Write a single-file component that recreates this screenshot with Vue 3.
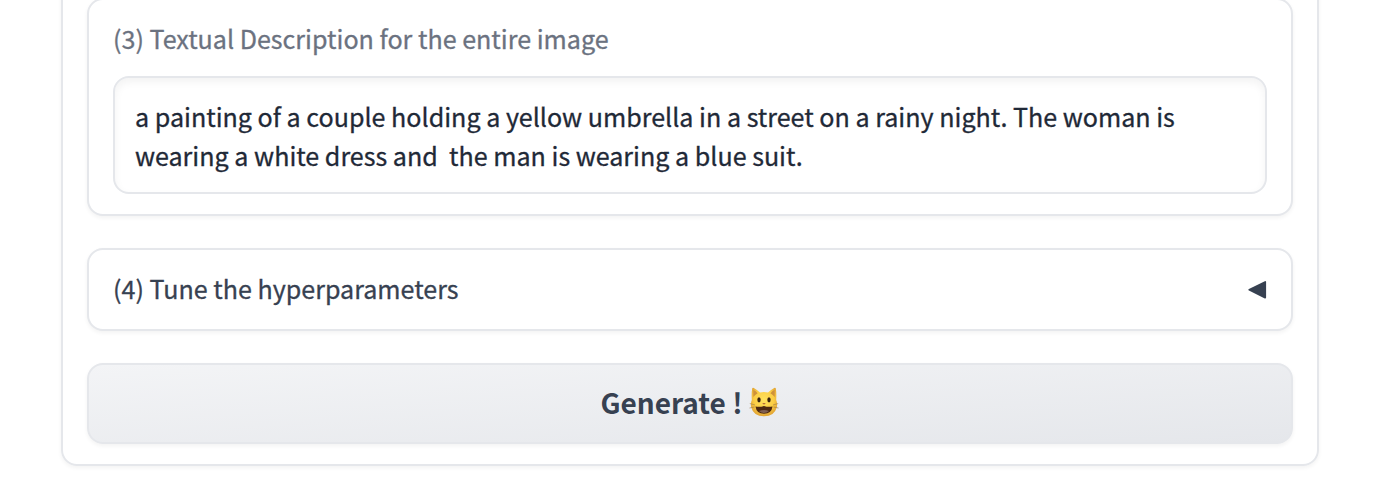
<script setup>
import { ref } from 'vue'

const prompt = ref('a painting of a couple holding a yellow umbrella in a street on a rainy night. The woman is\nwearing a white dress and  the man is wearing a blue suit.')
</script>

<template>
  <main class="page">
    <section class="group">
      <div class="panel description">
        <label class="label"><span>(3) Textual Description for the entire image</span></label>
        <div class="input"><span>{{ prompt }}</span></div>
      </div>
      <div class="panel accordion">
        <span class="title">(4) Tune the hyperparameters</span>
        <svg class="arrow" viewBox="0 0 19 18" width="19" height="18">
          <path d="M1.3 8.700 L17.200 1 V16.600 Z" fill="#374151" stroke="#374151" stroke-width="1.8" stroke-linejoin="round" />
        </svg>
      </div>
      <button class="generate">
        <span class="caption">Generate !</span>
        <svg class="cat" viewBox="0 0 30 32" width="30" height="32">
          <defs>
            <radialGradient id="fur" cx="50%" cy="42%" r="60%">
              <stop offset="0" stop-color="#ffe25c" />
              <stop offset=".62" stop-color="#fbcd45" />
              <stop offset="1" stop-color="#e0a233" />
            </radialGradient>
          </defs>
          <path d="M2.800 14 Q2.400 7 3.200 2.600 Q3.500 1.200 4.800 1.900 Q8.500 4 11 6.400 Q15 5.400 19 6.400 Q21.500 4 25.200 1.900 Q26.500 1.200 26.800 2.600 Q27.600 7 27.200 14 Q28.600 17 27.900 21 Q25.500 30.300 15 30.300 Q4.500 30.300 2.100 21 Q1.400 17 2.800 14 Z" fill="url(#fur)" />
          <path d="M4.300 3.800 Q7 5.200 8.600 7.200 Q6 8.800 4.300 11 Z M25.700 3.800 Q23 5.200 21.400 7.200 Q24 8.800 25.700 11 Z" fill="#ce913b" />
          <ellipse cx="10" cy="13.800" rx="1.700" ry="2.600" fill="#38220f" />
          <ellipse cx="20" cy="13.800" rx="1.700" ry="2.600" fill="#38220f" />
          <path d="M13.200 16.900 H16.800 L15 18.800 Z" fill="#b46a3a" />
          <path d="M6.500 20.400 Q10.500 21.500 15 20 Q19.500 21.500 23.500 20.400 Q22.500 27.700 15 27.700 Q7.500 27.700 6.500 20.400 Z" fill="#4c2810" />
          <path d="M10 25 Q15 23.200 20 25 Q18 26.900 15 26.900 Q12 26.900 10 25 Z" fill="#806052" />
          <path d="M.8 17.500 L6 19 M.5 22 L5.500 21 M29.200 17.500 L24 19 M29.500 22 L24.500 21" stroke="#9b7b49" stroke-width=".6" fill="none" />
        </svg>
      </button>
    </section>
  </main>
</template>

<style>
body { overflow: hidden; background: #fff; }
</style>

<style scoped>
.page {
  height: 487px;
  overflow: hidden;
  padding-left: 61px;
  box-sizing: border-box;
  font-family: "Noto Sans CJK SC", "Open Sans", sans-serif;
}
.page * { box-sizing: border-box; }
.group {
  display: flex;
  flex-direction: column;
  width: 1258px;
  height: 494px;
  margin-top: -28px;
  padding: 24px;
  border: 2px solid #e5e7eb;
  border-radius: 16px;
  box-shadow: 0 2px 4px rgba(0, 0, 0, .05);
}
.panel {
  border: 2px solid #e5e7eb;
  border-radius: 16px;
  background: #fff;
  box-shadow: 0 2px 4px rgba(0, 0, 0, .05);
}
.description {
  height: 218px;
  flex: none;
  padding: 19px 24px;
  display: flex;
  flex-direction: column;
}
.label {
  height: 57px;
  flex: none;
  line-height: 39px;
  color: #6b7280;
  font-size: 25.080px;
  -webkit-text-stroke: .3px;
  white-space: nowrap;
}
.input {
  height: 118px;
  flex: none;
  padding: 19px 20px;
  border: 2px solid #e5e7eb;
  border-radius: 16px;
  box-shadow: inset 0 4px 8px rgba(0, 0, 0, .05);
  color: #1f2937;
  font-size: 25.080px;
  line-height: 39px;
  -webkit-text-stroke: .3px;
  white-space: pre;
}
.accordion {
  display: flex;
  align-items: center;
  justify-content: space-between;
  flex: none;
  height: 83px;
  margin-top: 32px;
  padding: 0 24px;
  color: #374151;
  font-size: 25.080px;
}
.title {
  line-height: 39px;
  padding-bottom: 2px;
  -webkit-text-stroke: .3px;
}
.generate {
  display: flex;
  align-items: center;
  justify-content: center;
  gap: 6.5px;
  flex: none;
  height: 81px;
  margin-top: 32px;
  padding: 0 .5px 0 0;
  border: 2px solid #e5e7eb;
  border-radius: 16px;
  background: linear-gradient(to bottom right, #f3f4f6, #e5e7eb);
  box-shadow: 0 2px 4px rgba(0, 0, 0, .05);
  color: #374151;
  font: bold 28px/40px "Noto Sans CJK SC", sans-serif;
}
.caption { margin-top: -4px; }
.cat { margin-top: -3px; }
</style>
